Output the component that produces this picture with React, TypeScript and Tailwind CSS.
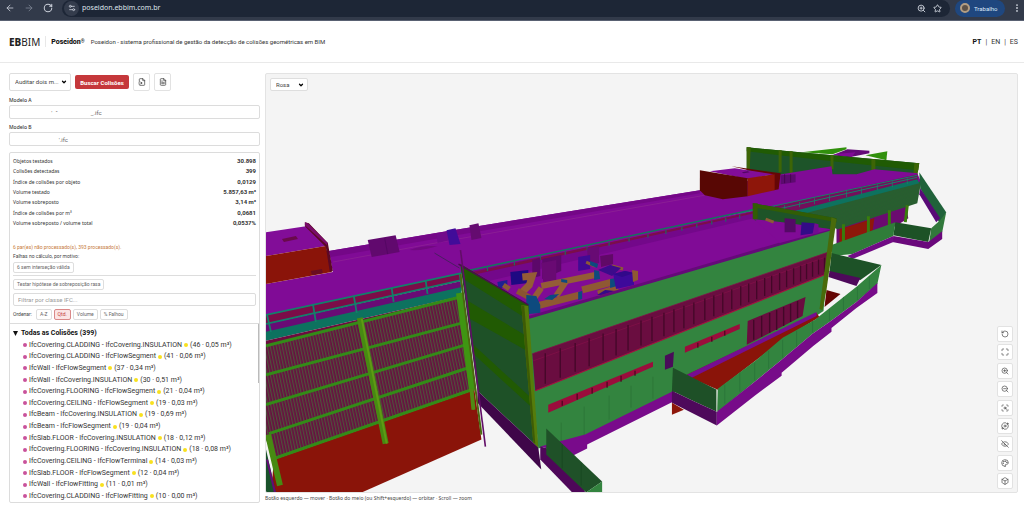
import type { ReactNode } from 'react';
import {
  ArrowLeft,
  ArrowRight,
  Box,
  ChevronDown,
  EllipsisVertical,
  EyeOff,
  FileInput,
  FileText,
  Maximize,
  Orbit,
  Palette,
  RotateCcw,
  RotateCw,
  ScanSearch,
  Settings2,
  Star,
  ZoomIn,
  ZoomOut,
} from 'lucide-react';

const stats = [
  ['Objetos testados', '30.898'],
  ['Colisões detectadas', '399'],
  ['Índice de colisões por objeto', '0,0129'],
  ['Volume testado', '5.857,63 m³'],
  ['Volume sobreposto', '3,14 m³'],
  ['Índice de colisões por m³', '0,0681'],
  ['Volume sobreposto / volume total', '0,0537%'],
];

const collisions = [
  ['IfcCovering.CLADDING - IfcCovering.INSULATION', '(46 · 0,05 m³)'],
  ['IfcCovering.CLADDING - IfcFlowSegment', '(41 · 0,06 m³)'],
  ['IfcWall - IfcFlowSegment', '(37 · 0,34 m³)'],
  ['IfcWall - IfcCovering.INSULATION', '(30 · 0,51 m³)'],
  ['IfcCovering.FLOORING - IfcFlowSegment', '(21 · 0,04 m³)'],
  ['IfcCovering.CEILING - IfcFlowSegment', '(19 · 0,03 m³)'],
  ['IfcBeam - IfcCovering.INSULATION', '(19 · 0,69 m³)'],
  ['IfcBeam - IfcFlowSegment', '(19 · 0,04 m³)'],
  ['IfcSlab.FLOOR - IfcCovering.INSULATION', '(18 · 0,12 m³)'],
  ['IfcCovering.FLOORING - IfcCovering.INSULATION', '(18 · 0,08 m³)'],
  ['IfcCovering.CEILING - IfcFlowTerminal', '(14 · 0,03 m³)'],
  ['IfcSlab.FLOOR - IfcFlowSegment', '(12 · 0,04 m³)'],
  ['IfcWall - IfcFlowFitting', '(11 · 0,01 m³)'],
  ['IfcCovering.CLADDING - IfcFlowFitting', '(10 · 0,00 m³)'],
];

const sortOptions = ['A-Z', 'Qtd.', 'Volume', '% Falhou'];

const viewerTools = [
  { label: 'Reiniciar vista', icon: RotateCcw },
  { label: 'Enquadrar tudo', icon: Maximize },
  { label: 'Aproximar', icon: ZoomIn },
  { label: 'Afastar', icon: ZoomOut },
  { label: 'Focar seleção', icon: ScanSearch },
  { label: 'Orbitar', icon: Orbit },
  { label: 'Ocultar', icon: EyeOff },
  { label: 'Cores', icon: Palette },
  { label: 'Projeção', icon: Box },
];

function BrowserBar() {
  return (
    <div className="flex h-[21px] shrink-0 items-center border-b border-[#596172] bg-[#323a4a] pr-0.5 pb-1 text-[#c9ced8]">
      <div className="flex w-[62px] items-center gap-[7px] pl-1">
        <button type="button" aria-label="Voltar" className="px-px">
          <ArrowLeft className="size-2.5" />
        </button>
        <button type="button" aria-label="Avançar" className="px-px text-[#7c8493]">
          <ArrowRight className="size-2.5" />
        </button>
        <button type="button" aria-label="Recarregar" className="px-px">
          <RotateCw className="size-2.5" strokeWidth={2.5} />
        </button>
      </div>
      <div className="flex h-[17px] flex-1 items-center gap-[3px] rounded-full bg-[#1d2636] pr-2">
        <span className="ml-0.5 flex size-[15px] items-center justify-center rounded-full bg-[#343c4c]">
          <Settings2 className="size-2" strokeWidth={2.5} />
        </span>
        <input
          aria-label="Endereço"
          defaultValue="poseidon.ebbim.com.br"
          className="min-w-0 flex-1 bg-transparent font-['Noto_Sans',sans-serif] text-[7px] text-[#dfe3ea] outline-none"
        />
        <button type="button" aria-label="Zoom">
          <ZoomIn className="size-[9px]" strokeWidth={2.5} />
        </button>
        <button type="button" aria-label="Favoritar" className="ml-1">
          <Star className="size-[9px]" strokeWidth={2.5} />
        </button>
      </div>
      <button
        type="button"
        className="ml-[5px] flex h-[17px] w-[50px] items-center gap-1 rounded-full bg-[#1f477f] pl-[5px] font-[Roboto,sans-serif] text-[6px] text-[#dce7f8]"
      >
        <span className="size-2.5 rounded-full border-2 border-[#b29d83] bg-[#5b5148]" />
        Trabalho
      </button>
      <button type="button" aria-label="Menu" className="ml-[7px]">
        <EllipsisVertical className="size-2.5" strokeWidth={2.5} />
      </button>
    </div>
  );
}

function AppHeader() {
  return (
    <header className="flex h-[42px] shrink-0 items-center border-b border-[#e9e9e9] pr-1.5 pl-[9px] text-[7px] leading-[10px] text-[#333]">
      <span className="font-['Noto_Sans',sans-serif] text-[10px] text-[#222]">
        <b className="font-extrabold">EB</b>BIM
      </span>
      <span className="mx-[5px] h-[11px] w-px bg-[#e8e8e8]" />
      <b className="flex font-extrabold text-[#111]">
        Poseidon<span className="text-[5px] leading-[8px]">®</span>
      </b>
      <span className="ml-1.5 text-[6px]">
        Poseidon - sistema profissional de gestão da detecção de colisões geométricas em BIM
      </span>
      <nav className="ml-auto flex gap-1">
        <a href="#pt" className="font-bold text-[#111]">PT</a>
        <span>|</span>
        <a href="#en">EN</a>
        <span>|</span>
        <a href="#es">ES</a>
      </nav>
    </header>
  );
}

interface SelectProps {
  label: string;
  value: string;
  className: string;
}

function Select({ label, value, className }: SelectProps) {
  return (
    <div className={`relative rounded-xs border border-[#dedede] bg-white ${className}`}>
      <select
        aria-label={label}
        defaultValue={value}
        className="block h-full w-full appearance-none bg-transparent pl-[5px] text-[6px] leading-none text-[#444] outline-none"
      >
        <option>{value}</option>
      </select>
      <ChevronDown
        className="pointer-events-none absolute inset-y-0 right-[3px] my-auto size-1.5 text-black"
        strokeWidth={5}
      />
    </div>
  );
}

function ModelField({ id, label, value }: { id: string; label: string; value: string }) {
  return (
    <div className="mt-[5px]">
      <label
        htmlFor={id}
        className="block font-['Noto_Sans',sans-serif] text-[5px] leading-[7px] font-medium text-[#333]"
      >
        {label}
      </label>
      <input
        id={id}
        defaultValue={value}
        className="mt-px block h-[14px] w-full rounded-xs border border-[#dcdcdc] px-1 text-[6px] text-[#666] outline-none"
      />
    </div>
  );
}

function Chip({ active, children }: { active?: boolean; children: ReactNode }) {
  return (
    <button
      type="button"
      aria-pressed={active}
      className={`h-[11px] rounded-xs border px-[3px] text-[5px] leading-none whitespace-nowrap ${
        active ? 'border-[#d98888] bg-[#fbe4e4] text-[#c23c3c]' : 'border-[#dedede] bg-white text-[#666]'
      }`}
    >
      {children}
    </button>
  );
}

function Sidebar() {
  return (
    <aside className="flex w-[251px] shrink-0 flex-col">
      <div className="mb-px flex h-[18px] items-stretch gap-1">
        <Select label="Modo de auditoria" value="Auditar dois m..." className="w-[62px]" />
        <button
          type="button"
          className="my-0.5 w-[54px] rounded-xs bg-[#c5383b] text-[6px] font-bold text-white"
        >
          Buscar Colisões
        </button>
        <button
          type="button"
          aria-label="Exportar"
          className="flex w-[17px] items-center justify-center rounded-xs border border-[#e2e2e2] text-[#333]"
        >
          <FileInput className="size-2" />
        </button>
        <button
          type="button"
          aria-label="Relatório"
          className="flex w-[17px] items-center justify-center rounded-xs border border-[#e2e2e2] text-[#333]"
        >
          <FileText className="size-2" />
        </button>
      </div>
      <ModelField id="modelo-a" label="Modelo A" value={'\u00a0'.repeat(25) + "'\u00a0\u00a0ˆ" + '\u00a0'.repeat(22) + '_.ifc'} />
      <ModelField id="modelo-b" label="Modelo B" value={'\u00a0'.repeat(30) + "'.ifc"} />

      <section className="mt-1.5 flex min-h-0 flex-1 flex-col rounded-xs border border-[#dcdcdc]">
        <div className="px-[3px]">
          <dl className="mt-[3px] flex h-[72px] flex-col justify-between text-[#333]">
            {stats.map(([name, value]) => (
              <div key={name} className="flex items-center justify-between leading-[10px]">
                <dt className="font-['Noto_Sans',sans-serif] text-[5px]">{name}</dt>
                <dd className="text-[6px] font-bold">{value}</dd>
              </div>
            ))}
          </dl>
          <p className="mt-[15px] text-[5px] leading-[9px] text-[#c67a3a]">
            6 par(es) não processado(s), 393 processado(s).
          </p>
          <p className="mb-px text-[5px] leading-[9px] text-[#444]">Falhas no cálculo, por motivo:</p>
          <div className="flex border-b border-[#ddd] pb-0.5">
            <Chip>6 sem interseção válida</Chip>
          </div>
          <div className="mt-[3px] flex">
            <Chip>Testar hipótese de sobreposição rasa</Chip>
          </div>
          <input
            aria-label="Filtrar por classe IFC"
            placeholder="Filtrar por classe IFC..."
            className="mt-[3px] block h-[13px] w-full rounded-xs border border-[#dcdcdc] px-1 text-[6px] outline-none placeholder:text-[#999]"
          />
          <div className="mt-[3px] flex items-center gap-0.5 text-[5px] leading-[11px] text-[#444]">
            <span className="mr-0.5">Ordenar:</span>
            {sortOptions.map((option) => (
              <Chip key={option} active={option === 'Qtd.'}>
                {option}
              </Chip>
            ))}
          </div>
        </div>
        <div className="mt-[3px] flex min-h-0 flex-1 border-t border-[#dcdcdc] text-[7px] text-[#333]">
          <div className="flex min-h-0 flex-1 flex-col justify-between pt-1 pl-[3px]">
            <button type="button" className="flex items-center gap-[3px] leading-[11px] font-bold text-[#111]">
              <svg viewBox="0 0 6 6" className="size-[5px]">
                <path d="M0 0h6L3 6z" fill="currentColor" />
              </svg>
              Todas as Colisões (399)
            </button>
            {collisions.map(([name, total]) => (
              <div key={name} className="flex items-center gap-0.5 pl-2.5 leading-[11px] whitespace-nowrap">
                <span className="size-1 rounded-full bg-[#c9529b]" />
                <span>{name}</span>
                <span className="size-1 rounded-full bg-[#f8e11e]" />
                <span>{total}</span>
              </div>
            ))}
          </div>
          <span className="h-[59px] w-px bg-[#bbb]" />
        </div>
      </section>
    </aside>
  );
}

// Window columns of the front facade get narrower towards the far end.
const facadeColumns = [
  545, 560, 575, 589, 603, 616, 628, 641, 652, 664, 674, 684, 694, 705, 714, 723, 732, 741, 749, 757,
  765, 772, 780, 787, 794, 801, 807, 813, 819, 825,
];
const railPosts = [487, 514, 540, 565, 587, 609, 629, 648, 666, 682, 697, 712, 726, 740];

function BuildingModel() {
  return (
    <svg
      viewBox="265 73 753 420"
      preserveAspectRatio="xMidYMid slice"
      className="absolute inset-0 h-full w-full"
      role="img"
      aria-label="Modelo 3D"
    >
      <defs>
        <pattern id="fence" width="3" height="8" patternUnits="userSpaceOnUse" patternTransform="skewX(12)">
          <rect width="3" height="8" fill="#680f40" />
          <rect width="1.3" height="8" fill="#50503c" />
        </pattern>
        <pattern id="mesh" width="2" height="2" patternUnits="userSpaceOnUse" patternTransform="rotate(25)">
          <rect width="2" height="2" fill="#25612e" />
          <rect width="1" height="2" fill="#2b5a31" />
        </pattern>
      </defs>

      {/* far wing */}
      <path d="M802 152L847 147V149L833 154Z" fill="#31900c" />
      <path d="M833 155L848 149L870 150.500V153L850 157Z" fill="#630a78" />
      <path d="M833 154L856 152L852 157Z" fill="#800b96" />
      <path d="M866 155L888 151L887 160Z" fill="#31900c" />
      <path d="M747 147L920 163L916 176L833 176L783 178L747 172Z" fill="#1d5429" />
      <path d="M747 147L920 163L919 170L833 161L747 151Z" fill="#205b04" />
      <path d="M747 147h4l-1 22h-3zM779 150h3v22h-3zM790 151h3v22h-3zM831 155h3v14h-3zM872 159h4v11h-4zM915 163h5l-2 13h-4z" fill="#3d6506" />

      {/* main roof */}
      <path d="M265 284L332 272L328 251L440 232L700 190L782 174L832 166L833 174L857 174L875 169L918 173L922 182L800 214L755 210L461 273L265 315Z" fill="#800b96" />
      <path d="M328 251L440 232L700 190V193L440 238L330 257Z" fill="#740787" />
      <path d="M332 262L440 242L705 195" stroke="#8f2594" strokeWidth="0.7" fill="none" />

      {/* left stair tower */}
      <path d="M265 232L305 226L325 246L265 256Z" fill="#820d98" />
      <path d="M265 256L325 246L331 272L265 284Z" fill="#8a1409" />
      <path d="M304 222L308 223L327 243L332 271L329 272L325 247L304 226Z" fill="#5c0824" />
      <path d="M304 222l3 1l20 20l-1 2l-22-20z" fill="#790c69" />
      <path d="M281 239l14-3l2 3l-14 3z" fill="#690a4b" />
      <path d="M310 271l11-2l1 4l-11 2z" fill="#690d20" />

      {/* roof equipment */}
      <path d="M367 240L395 235L399 252L371 257Z" fill="#61096e" />
      <path d="M384 238l3 16" stroke="#540763" />
      <path d="M436 234l11-3l3 9l-13 3z" fill="#720a8b" />
      <path d="M446 230l9-2l5 16l-11 1z" fill="#410c99" />
      <path d="M469 225l9-2l3 15l-10 2z" fill="#650b70" />
      <path d="M409 250q12-5 28-4q-14 5-28 4z" fill="#720981" />

      {/* red machine room */}
      <path d="M732 166L781 173L779 189L774 190L774 176Z" fill="#650606" />
      <path d="M710 171L735 168L774 174L748 179Z" fill="#820d98" />
      <path d="M700 170L748 178V196L723 199L705 195L700 190Z" fill="#580704" />
      <path d="M748 178L775 174V190L748 196Z" fill="#8e160a" />
      <path d="M742 172l6-1l2 1l-6 1z" fill="#510764" />
      <path d="M781 175l15-1v8l-15 2z" fill="#5d0a70" />
      <path d="M785 174v9M791 174v8" stroke="#470553" />

      {/* left facade, balustrade and screen */}
      <path d="M265 315L461 273L461 281L265 324Z" fill="#7b0c48" />
      <path d="M265 324L461 281V289L265 333Z" fill="#690b75" />
      <path d="M265 332L461 287V296L265 341Z" fill="#0d725f" />
      <path d="M265 315L461 273M265 324L461 280M266 315l4 17M312 304l3 18M353 296l3 17M391 288l2 14M425 280l2 14M459 273l3 18" stroke="#12806a" strokeWidth="1.8" />
      <path d="M265 341L461 296L463 305L265 352Z" fill="#6b0d3e" />
      <path d="M265 346L461 298L474 390L273 460L265 440Z" fill="url(#fence)" />
      <path d="M273 460L474 390L481 440L361 493H270Z" fill="#8a1409" />
      <path d="M265 450L275 493H265Z" fill="#19522a" />
      <path d="M266 460L274 493" stroke="#640a76" strokeWidth="2" />
      <path d="M265 346L460 297M265 375L462 323M265 405L465 345M268 434L468 368M273 459L474 389" stroke="#338b17" strokeWidth="3" />
      <path d="M359 318L385 444M267 435L279 486" stroke="#478a12" strokeWidth="6" />
      <path d="M361 319L386 444M460 293L473 410" stroke="#5e9b14" strokeWidth="2" />
      <path d="M459 293L472 390" stroke="#3f9512" strokeWidth="7" />
      <path d="M471 389l2 21" stroke="#4f8b13" strokeWidth="4" />

      {/* lower roof */}
      <path d="M461 269L755 210L835 229L526 319L461 272Z" fill="#800b96" />
      <path d="M461 273L755 213L758 217L480 283Z" fill="#73088a" />
      <path d="M472 272L755 211L755 213L472 275Z" fill="#7b0d4b" />
      <path d="M461 272L755 209" stroke="#16735f" strokeWidth="1.5" />
      {railPosts.map((x) => (
        <path key={x} d={`M${x} ${267 - (x - 487) * 0.207}v4`} stroke="#16735f" />
      ))}

      {/* ducts and units */}
      <path d="M532 260l8-2v18l-8 2zM542 259l19-4v16l-19 8z" fill="#5c086a" />
      <path d="M541 263l15-3v20l-13 2z" fill="#690a73" />
      <path d="M587 248l12-2v17l-11 4z" fill="#680a74" />
      <path d="M600 256l13-2v10l-12 3z" fill="#600967" />
      <path d="M578 257l12-2v14l-12 2z" fill="#400a94" />
      <path d="M510 272l18-2v13l-17 2z" fill="#1e0982" />
      <path d="M497 282l10-2v6l-9 3z" fill="#202090" />
      <path d="M503 285l6 4" stroke="#8c5a36" strokeWidth="5" />
      <path d="M586 262l9 4M612 266l11 3" stroke="#8c5a36" strokeWidth="3" />
      <path d="M541 288l-7 10M566 281l-10 15M541 286L595 275" stroke="#945c36" strokeWidth="6" fill="none" />
      <path d="M529 308L580 295M582 290L612 282M598 294l20-6" stroke="#8f5833" strokeWidth="7" />
      <path d="M522 277l10-1l-3 9l-8 8" stroke="#945c36" strokeWidth="7" fill="none" />
      <path d="M517 291l13 7" stroke="#8a5431" strokeWidth="6" />
      <path d="M594 270l5 1l1 8l-6 1zM610 279l7-1v8l-7 2zM578 292l4-1v8l-4 1zM526 295l10 1l4 9v8l-12 1l-2-10zM544 299l6-4l9-1l-7 6zM590 261l8 3l-1 4l-7-3zM561 279l6 1v3l-6-1z" fill="#0d4a7e" />
      <path d="M598 270l12-5l11 3l-9 8z" fill="#3b0b8b" />
      <path d="M613 274l12-3l9 2v12l-18 4z" fill="#3d0a9a" />
      <path d="M613 274l12-3l9 2l-12 4z" fill="#31098a" />
      <path d="M632 270l6 1v9l-5 2z" fill="#8f5933" />
      <path d="M597 295l8-5l10 1l-13 4z" fill="#340a87" />

      {/* far right facade */}
      <path d="M837 228L907 205L909 218L896 226L837 246Z" fill="#6b0b70" />
      <path d="M840 229L875 218L873 232L840 243Z" fill="#8e170a" />
      <path d="M802 212L922 181L918 203L872 218L838 229Z" fill="url(#mesh)" />
      <path d="M775 206L918 174L919 182L802 213L773 210Z" fill="#730f5b" />
      <path d="M790 212L918 179L920 183L802 214Z" fill="#0d725f" />
      <path d="M740 213L773 206L918 175M778 209L918 177" stroke="#178069" strokeWidth="1" fill="none" />
      <path d="M785 205v5M800 202v5M815 198v6M830 195v6M847 191v6M862 188v6M878 184v6M893 181v6M908 178v6" stroke="#178069" strokeWidth="0.8" />
      <path d="M844 224v18M869 216v17M890 210v15M908 205l-2 17" stroke="#397d0c" strokeWidth="3" />
      <path d="M920 172L947 212L941 224L921 188Z" fill="#20623a" />
      <path d="M921 188L941 218L937 222L920 194Z" fill="#580a76" />
      <path d="M941 220L947 212L943 232L930 242L932 228Z" fill="#31793b" />
      <path d="M896 222L932 228L929 242L894 235Z" fill="#1d5226" />
      <path d="M894 236L929 242L943 231V239L929 249L893 242Z" fill="#6a087b" />
      <path d="M832 245L896 222L894 236L853 254L832 256Z" fill="#2f7d39" />
      <path d="M848 256L894 236V242L853 259Z" fill="#710b85" />

      {/* side wall */}
      <path d="M460 266L528 305L538 448L477 391Z" fill="#1e5127" />
      <path d="M460 264L528 305V320L463 279ZM466 300L531 339L532 354L468 318ZM473 345L535 402V411L474 355Z" fill="#215a03" />
      <path d="M458 264L528 305" stroke="#4b0c50" strokeWidth="1.5" />
      <path d="M477 391L538 448L541 470L477 403Z" fill="#3f0649" />
      <path d="M460 274L481 435" stroke="#4b6910" strokeWidth="2" />
      <path d="M460 250L485 447" stroke="#610d67" strokeWidth="1.6" />
      <path d="M434 253L459 268" stroke="#3b2354" strokeWidth="0.8" />

      {/* front wall */}
      <path d="M527 318L831 229L824 311L818 315L687 378L673 394L585 436L538 449Z" fill="#33843f" />
      <path d="M527 318L831 229" stroke="#650a79" strokeWidth="3" />
      <path d="M532 354L829 252L827 274L535 391Z" fill="#6a0d40" />
      <path d="M535 391L827 274" stroke="#a11240" strokeWidth="1.2" />
      <path d="M532 354L829 252M533 361L829 256" stroke="#821047" strokeWidth="0.8" />
      {facadeColumns.map((x) => (
        <path
          key={x}
          d={`M${x} ${354 - (x - 532) * 0.343 + 4}L${x} ${390 - (x - 535) * 0.4 - 2}`}
          stroke="#430828"
          strokeWidth="1.3"
        />
      ))}
      <path d="M548 405L653 362V367L548 413ZM685 347L740 324V329L685 353Z" fill="#9b0d3c" />
      <path d="M562 401v5M577 394v6M592 388v6M607 382v6M621 376v6M635 371v5M698 343v5M712 337v5M725 331v5" stroke="#4c0820" strokeWidth="1.3" />
      <path d="M665 356L674 352L673 367L665 370Z" fill="#490c59" />
      <path d="M748 321L806 297L803 316L747 345Z" fill="#6a0d40" />
      <path d="M754 320v20M762 316v21M770 313v20M777 310v20M784 307v19M791 304v18M798 301v17" stroke="#430828" strokeWidth="1.4" />
      <path d="M561 423v22M584 407v29M609 396v24M631 386v22M653 377v22" stroke="#2b7336" strokeWidth="0.8" />
      <path d="M521 305L528 306L538 448L533 443Z" fill="#557c0b" />
      <path d="M521 305L524 306L535 444L533 443Z" fill="#3e5b05" />
      <path d="M540 447L585 435L672 392L673 402L587 445V449L573 456Z" fill="#790b8b" />

      {/* entrance ramp */}
      <path d="M540 447L573 456L585 493H572L540 460Z" fill="#4e0759" />
      <path d="M546 429L602 482L586 493L546 455Z" fill="#1f5128" />
      <path d="M602 482V493H586Z" fill="#33843f" />
      <path d="M562 445v24M581 463v23" stroke="#17451f" strokeWidth="0.7" />

      {/* right end of the front block */}
      <path d="M753 203L837 218L832 229L783 225L755 220Z" fill="#1e5428" />
      <path d="M753 203L837 218V222L753 207ZM753 203h5v16h-5z" fill="#315d05" />
      <path d="M755 219L783 222L832 229L780 243Z" fill="#800b96" />
      <path d="M785 218l11 1v13h-11z" fill="#540a66" />
      <path d="M802 222l13 1v10l-14 2z" fill="#330b87" />
      <path d="M815 223l4 1v9l-6 1z" fill="#720b90" />
      <path d="M766 219l8 3" stroke="#8c5a36" strokeWidth="3" />
      <path d="M832 253L882 265L861 280L830 272Z" fill="#1d5227" />
      <path d="M830 271L861 278L857 286L829 277Z" fill="#4e095b" />
      <path d="M827 290L841 294L825 307Z" fill="#650604" />

      {/* courtyard */}
      <path d="M687 375L817 313L820 317L783 340L757 360L718 390L695 380Z" fill="#8a1409" />
      <path d="M687 375L817 312V316L692 378Z" fill="#760d91" />
      <path d="M673 368L717 390V412L695 402L672 391Z" fill="#1e5027" />
      <path d="M672 391L695 402L717 412V426L672 403Z" fill="#4e095b" />
      <path d="M672 403L684 410L672 415Z" fill="#8e160a" />
      <path d="M718 389L757 360L783 338L815 320L858 286L882 265L878 284L857 302L830 322L813 334L782 360L755 382L717 413Z" fill="#33843f" />
      <path d="M717 412L755 382L782 360L813 334L830 322L857 302L878 283V293L857 308L832 328V332L814 346L782 373V376L755 396L717 426Z" fill="#770b89" />
      <path d="M725 385v19M740 373v19M755 363v18M769 351v18M783 340v18M797 331v16M813 321v12M830 309v12M844 297v14M858 287v13M870 276v13" stroke="#29733a" strokeWidth="0.8" />
      <path d="M717 390v22" stroke="#b7c7b7" strokeWidth="1.2" />
      <path d="M832 217L837 219L827 290L823 310L820 309Z" fill="#496b0b" />
    </svg>
  );
}

function Viewer() {
  return (
    <main className="flex min-w-0 flex-1 flex-col">
      <div className="relative min-h-0 flex-1 overflow-hidden rounded-xs border border-[#e3e3e3] bg-[#f4f4f4]">
        <BuildingModel />
        <div className="absolute top-1 left-1">
          <Select label="Cor de destaque" value="Rosa" className="h-[13px] w-[38px]" />
        </div>
        <div className="absolute right-1 bottom-[3px] flex h-[163px] flex-col justify-between">
          {viewerTools.map(({ label, icon: Icon }) => (
            <button
              key={label}
              type="button"
              title={label}
              className="flex size-4 items-center justify-center rounded-xs border border-[#e2e2e2] bg-white text-[#444]"
            >
              <Icon className="size-2" />
            </button>
          ))}
        </div>
      </div>
      <p className="mt-px font-['Noto_Sans',sans-serif] text-[5px] leading-[9px] text-[#444]">
        Botão esquerdo — mover · Botão do meio (ou Shift+esquerdo) — orbitar · Scroll — zoom
      </p>
    </main>
  );
}

export default function App() {
  return (
    <div className="flex h-screen flex-col bg-white font-[Roboto,sans-serif]">
      <BrowserBar />
      <AppHeader />
      <div className="flex min-h-0 flex-1 gap-[5px] pt-2.5 pr-1.5 pb-1 pl-[9px]">
        <Sidebar />
        <Viewer />
      </div>
    </div>
  );
}
